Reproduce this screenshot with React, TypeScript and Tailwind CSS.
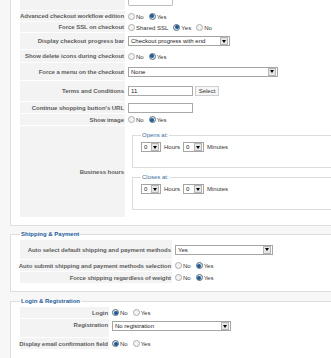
import React from 'react'

const Radio = ({ checked }: { checked?: boolean }) =>
  checked ? (
    <span className="flex h-[7px] w-[7px] shrink-0 items-center justify-center rounded-full border border-[#5f6f80] bg-[#dbe6f0]">
      <span className="h-[4px] w-[4px] rounded-full bg-[#1c5a94]" />
    </span>
  ) : (
    <span className="h-[7px] w-[7px] shrink-0 rounded-full border border-[#acacac] bg-[#f3f3f3]" />
  )

const Choice = ({ options, value }: { options: string[]; value: string }) => (
  <div className="flex items-center whitespace-nowrap">
    {options.map((o) => (
      <label key={o} className="mr-[5px] flex items-center">
        <Radio checked={o === value} />
        <span className="ml-[1px] pt-[1px] text-[#333]">{o}</span>
      </label>
    ))}
  </div>
)

const Select = ({ w, text }: { w: string; text: string }) => (
  <div className={`${w} flex h-[10px] shrink-0 items-center border border-[#a5a5a5] bg-white`}>
    <span className="flex-1 truncate pl-[2px] text-[#222]">{text}</span>
    <span className="mr-px flex h-[8px] w-[8px] items-center justify-center border border-[#b5b5b5] bg-[#e6e6e6]">
      <span className="border-x-[2px] border-t-[3px] border-x-transparent border-t-black" />
    </span>
  </div>
)

const Input = ({ text }: { text?: string }) => (
  <div className="flex h-[10px] w-[65px] items-center border border-[#a9a9a9] bg-white pl-[2px] text-[#222]">{text}</div>
)

const Row = ({
  label,
  lw,
  h,
  top,
  children,
}: {
  label: string
  lw: string
  h: string
  top?: boolean
  children?: React.ReactNode
}) => (
  <div className={`flex gap-[2px] ${h}`}>
    <div
      className={`${lw} flex shrink-0 justify-end whitespace-nowrap bg-[#f3f3f3] pr-px text-right font-bold tracking-[-0.05px] text-[#5e5e5e] ${
        top ? 'items-start pt-[2px]' : 'items-center'
      }`}
    >
      {label}
    </div>
    <div className={`flex min-w-0 flex-1 pl-px ${top ? 'items-start pt-[2px]' : 'items-center'}`}>{children}</div>
  </div>
)

const Time = () => (
  <div className="flex items-center gap-[3px] text-[#333]">
    <Select w="w-[20px]" text="0" />
    <span>Hours</span>
    <Select w="w-[21px]" text="0" />
    <span>Minutes</span>
  </div>
)

const Legend = ({ children, bold }: { children: React.ReactNode; bold?: boolean }) => (
  <legend className={`px-px leading-[8px] ${bold ? 'font-bold text-[#1d5c99]' : 'text-[#3d6d9e]'}`}>{children}</legend>
)

export default function App() {
  const l1 = 'w-[105px]'
  const l2 = 'w-[152px]'
  const l3 = 'w-[89px]'
  return (
    <div className="h-[358px] w-[331px] overflow-hidden bg-[#f7f7f7] pl-[10px] font-['Liberation_Sans',Arial,sans-serif] text-[6px] leading-[8px]">
      <div className="border-b border-l border-[#dedede] bg-white pb-[8px] pl-[9px]">
        <div className="flex flex-col gap-px">
          <Row label="" lw={l1} h="h-[10px]" top>
            <div className="-mt-[2px] h-[6px] w-[45px] rounded-b-[2px] border-x border-b border-[#bdbdbd]" />
          </Row>
          <Row label="Advanced checkout workflow edition" lw={l1} h="h-[10px]">
            <Choice options={['No', 'Yes']} value="Yes" />
          </Row>
          <Row label="Force SSL on checkout" lw={l1} h="h-[10px]">
            <Choice options={['Shared SSL', 'Yes', 'No']} value="Yes" />
          </Row>
          <Row label="Display checkout progress bar" lw={l1} h="h-[16px]">
            <Select w="w-[102px]" text="Checkout progress with end" />
          </Row>
          <Row label="Show delete icons during checkout" lw={l1} h="h-[12px]">
            <Choice options={['No', 'Yes']} value="Yes" />
          </Row>
          <Row label="Force a menu on the checkout" lw={l1} h="h-[17px]">
            <Select w="w-[150px]" text="None" />
          </Row>
          <Row label="Terms and Conditions" lw={l1} h="h-[20px]">
            <Input text="11" />
            <button className="ml-[2px] flex h-[10px] w-[24px] items-center justify-center border border-[#cfcfcf] bg-[#f6f6f6] text-[#333]">
              Select
            </button>
          </Row>
          <Row label="Continue shopping button's URL" lw={l1} h="h-[11px]">
            <Input />
          </Row>
          <Row label="Show image" lw={l1} h="h-[11px]">
            <Choice options={['No', 'Yes']} value="Yes" />
          </Row>
          <Row label="Business hours" lw={l1} h="h-[91px]">
            <div className="flex h-full flex-1 flex-col pl-[4px]">
              <fieldset className="mt-[5px] min-w-0 border-y border-l border-[#dcdcdc] pb-[15px] pl-[8px] pt-[3px]">
                <Legend>Opens at:</Legend>
                <Time />
              </fieldset>
              <fieldset className="mt-[5px] min-w-0 border-y border-l border-[#dcdcdc] pb-[15px] pl-[8px] pt-[3px]">
                <Legend>Closes at:</Legend>
                <Time />
              </fieldset>
            </div>
          </Row>
        </div>
      </div>

      <fieldset className="mt-[4px] min-w-0 border-y border-l border-[#dedede] bg-white pb-[8px] pl-[9px] pt-[2px]">
        <Legend bold>Shipping &amp; Payment</Legend>
        <div className="flex flex-col gap-px">
          <Row label="Auto select default shipping and payment methods" lw={l2} h="h-[19px]">
            <Select w="w-[98px]" text="Yes" />
          </Row>
          <Row label="Auto submit shipping and payment methods selection" lw={l2} h="h-[11px]">
            <Choice options={['No', 'Yes']} value="Yes" />
          </Row>
          <Row label="Force shipping regardless of weight" lw={l2} h="h-[11px]">
            <Choice options={['No', 'Yes']} value="Yes" />
          </Row>
        </div>
      </fieldset>

      <fieldset className="mt-[5px] min-w-0 border-y border-l border-[#dedede] bg-white pb-[12px] pl-[9px] pt-[2px]">
        <Legend bold>Login &amp; Registration</Legend>
        <div className="flex flex-col gap-px">
          <Row label="Login" lw={l3} h="h-[11px]">
            <Choice options={['No', 'Yes']} value="No" />
          </Row>
          <Row label="Registration" lw={l3} h="h-[18px]" top>
            <Select w="w-[119px]" text="No registration" />
          </Row>
          <Row label="Display email confirmation field" lw={l3} h="h-[11px]">
            <Choice options={['No', 'Yes']} value="No" />
          </Row>
        </div>
      </fieldset>
    </div>
  )
}
